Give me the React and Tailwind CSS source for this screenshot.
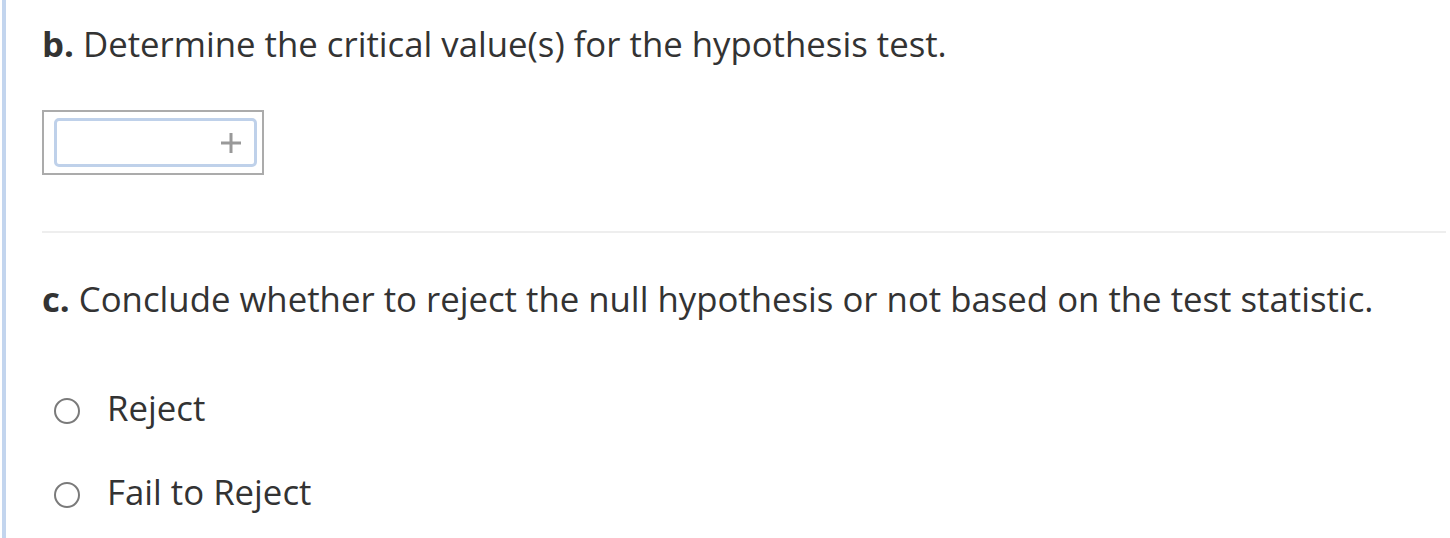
export default function App() {
  const font = { fontFamily: '"Open Sans", "Noto Sans", sans-serif' };
  return (
    <div className="w-[1450px] h-[538px] bg-white flex overflow-hidden" style={font}>
      <div className="w-[2px] shrink-0" />
      <div className="w-[4px] shrink-0 bg-[#c3d5ee]" />
      <div className="flex-1 pl-[36px] pr-[4px] text-[#333333]">
        <div className="pt-[20px] text-[34.75px] leading-[48px] whitespace-nowrap">
          <span className="font-bold">b.</span> Determine the critical value(s) for the hypothesis test.
        </div>
        <div className="mt-[42px] w-[222px] h-[65px] border-2 border-[#ababab] p-[6px] pl-[10px]">
          <div className="w-[203px] h-[49px] border-[3px] border-[#bfd1ea] rounded-[5px] flex items-center justify-end pr-[13px]">
            <svg width="20" height="20" viewBox="0 0 20 20">
              <path d="M10 0 V20 M0 10 H20" stroke="#999999" strokeWidth="3" />
            </svg>
          </div>
        </div>
        <div className="mt-[56px] h-[2px] bg-[#eeeeee]" />
        <div className="mt-[42px] text-[34.75px] leading-[48px] whitespace-nowrap">
          <span className="font-bold">c.</span> Conclude whether to reject the null hypothesis or not based on the test statistic.
        </div>
        <div className="mt-[61px] flex flex-col gap-[36px]">
          {['Reject', 'Fail to Reject'].map((t) => (
            <div key={t} className="flex items-start h-[48px] text-[34.75px] leading-[48px]">
              <div className="mt-[14px] ml-[12px] w-[26px] h-[26px] rounded-full border-2 border-[#7a7a7a] shrink-0" />
              <span className="ml-[27px]">{t}</span>
            </div>
          ))}
        </div>
      </div>
    </div>
  );
}
